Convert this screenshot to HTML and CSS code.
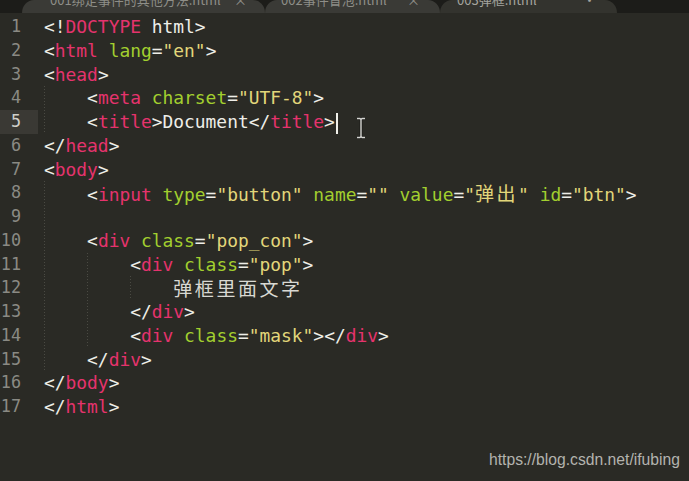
FILE: index.html
```html
<!DOCTYPE html>
<html lang="zh">
<head>
  <meta charset="UTF-8" />
  <title>003弹框.html</title>
  <link rel="stylesheet" href="styles.css">
</head>
<body>
  <div class="tabbar">
    <div class="tab t1"><span class="tab-name">001绑定事件的其他方法.html</span><span class="tab-x">×</span></div>
    <div class="tab t2"><span class="tab-name">002事件冒泡.html</span><span class="tab-x">×</span></div>
    <div class="tab t3 active"><span class="tab-name">003弹框.html</span><span class="tab-x">•</span></div>
  </div>

  <div class="editor">
    <div class="row"><span class="num">1</span><span class="code">&lt;!<span class="t">DOCTYPE</span> html&gt;</span></div>
    <div class="row"><span class="num">2</span><span class="code">&lt;<span class="t">html</span> <span class="a">lang</span>=<span class="s">"en"</span>&gt;</span></div>
    <div class="row"><span class="num">3</span><span class="code">&lt;<span class="t">head</span>&gt;</span></div>
    <div class="row"><span class="num">4</span><span class="code"><span class="ig">    </span>&lt;<span class="t">meta</span> <span class="a">charset</span>=<span class="s">"UTF-8"</span>&gt;</span></div>
    <div class="row cur"><span class="num">5</span><span class="code"><span class="ig">    </span>&lt;<span class="t">title</span>&gt;Document&lt;/<span class="t">title</span>&gt;<span class="caret"></span></span></div>
    <div class="row"><span class="num">6</span><span class="code">&lt;/<span class="t">head</span>&gt;</span></div>
    <div class="row"><span class="num">7</span><span class="code">&lt;<span class="t">body</span>&gt;</span></div>
    <div class="row"><span class="num">8</span><span class="code"><span class="ig">    </span>&lt;<span class="t">input</span> <span class="a">type</span>=<span class="s">"button"</span> <span class="a">name</span>=<span class="s">""</span> <span class="a">value</span>=<span class="s">"<span class="zh">弹出</span>"</span> <span class="a">id</span>=<span class="s">"btn"</span>&gt;</span></div>
    <div class="row"><span class="num">9</span><span class="code"><span class="ig">    </span></span></div>
    <div class="row"><span class="num">10</span><span class="code"><span class="ig">    </span>&lt;<span class="t">div</span> <span class="a">class</span>=<span class="s">"pop_con"</span>&gt;</span></div>
    <div class="row"><span class="num">11</span><span class="code"><span class="ig">    </span><span class="ig">    </span>&lt;<span class="t">div</span> <span class="a">class</span>=<span class="s">"pop"</span>&gt;</span></div>
    <div class="row"><span class="num">12</span><span class="code"><span class="ig">    </span><span class="ig">    </span><span class="ig">    </span><span class="zh txt">弹框里面文字</span></span></div>
    <div class="row"><span class="num">13</span><span class="code"><span class="ig">    </span><span class="ig">    </span>&lt;/<span class="t">div</span>&gt;</span></div>
    <div class="row"><span class="num">14</span><span class="code"><span class="ig">    </span><span class="ig">    </span>&lt;<span class="t">div</span> <span class="a">class</span>=<span class="s">"mask"</span>&gt;&lt;/<span class="t">div</span>&gt;</span></div>
    <div class="row"><span class="num">15</span><span class="code"><span class="ig">    </span>&lt;/<span class="t">div</span>&gt;</span></div>
    <div class="row"><span class="num">16</span><span class="code">&lt;/<span class="t">body</span>&gt;</span></div>
    <div class="row"><span class="num">17</span><span class="code">&lt;/<span class="t">html</span>&gt;</span></div>
  </div>

  <!-- mouse pointer over the editor -->
  <svg class="ibeam" width="12" height="22" viewBox="0 0 12 22">
    <path d="M2 1.5h3l1 1 1-1h3M6 2.5v17M2 20.5h3l1-1 1 1h3" fill="none" stroke="#1c1c1a" stroke-width="3"/>
    <path d="M2 1.5h3l1 1 1-1h3M6 2.5v17M2 20.5h3l1-1 1 1h3" fill="none" stroke="#d6d6d2" stroke-width="1.4"/>
  </svg>

  <div class="mark">https://blog.csdn.net/ifubing</div>
</body>
</html>
```

FILE: styles.css
```css
body {
  margin: 0;
  height: 481px;
  overflow: hidden;
  position: relative;
  background: #2a2a25;
  font-family: "DejaVu Sans Mono", monospace;
}

/* tab strip, only the lower edge is visible */
.tabbar {
  display: flex;
  height: 13px;
  padding-left: 22px;
  background: #1c1c19;
  overflow: hidden;
}

.tab {
  display: flex;
  justify-content: space-between;
  align-items: flex-start;
  height: 13px;
  overflow: hidden;
  background: #3a3a36;
  border-radius: 12px 12px 0 0 / 13px 13px 0 0;
  color: #8e8e88;
  font: 13px "Noto Sans CJK SC", sans-serif;
  line-height: 16px;
}

.tab-name, .tab-x { margin-top: -8px; }

.t1 { width: 243px; padding: 0 18px 0 28px; box-sizing: border-box; }
.t2 { width: 175px; padding: 0 20px 0 16px; box-sizing: border-box; }
.t3 { width: 177px; padding: 0 21px 0 17px; box-sizing: border-box; background: #33332e; color: #a4a49e; }

/* code area */
.editor { padding-top: 2px; }

.row {
  display: flex;
  height: 23.75px;
  line-height: 23.75px;
  font-size: 17.9px;
}

.num {
  flex: none;
  width: 21px;
  padding-right: 17px;
  text-align: right;
  color: #8a8a84;
  font-size: 16.8px;
}

.row.cur .num { background: #3a3934; color: #cfcfc9; }

.code {
  margin-left: 6px;
  white-space: pre;
  color: #eeeee8;
}

.t { color: #e5336d; }
.a { color: #a2cf2f; }
.s { color: #e2d67a; }

.ig {
  display: inline-block;
  vertical-align: top;
  height: 23.75px;
  background: repeating-linear-gradient(to bottom, #4a4a43 0 1px, transparent 1px 3px) 0 0 / 1px 100% no-repeat;
}

.zh {
  font-family: "Noto Sans CJK SC", sans-serif;
  font-size: 19px;
  letter-spacing: 2.55px;
}

.zh.txt { color: #d9d9d3; }

.caret {
  display: inline-block;
  width: 2px;
  height: 21px;
  margin-left: 1px;
  vertical-align: middle;
  background: #f0f0ea;
}

.ibeam {
  position: absolute;
  left: 355px;
  top: 117px;
}

.mark {
  position: absolute;
  right: 9px;
  top: 451px;
  color: #b3b3ae;
  font: 15.7px "Liberation Sans", Arial, sans-serif;
}
```
